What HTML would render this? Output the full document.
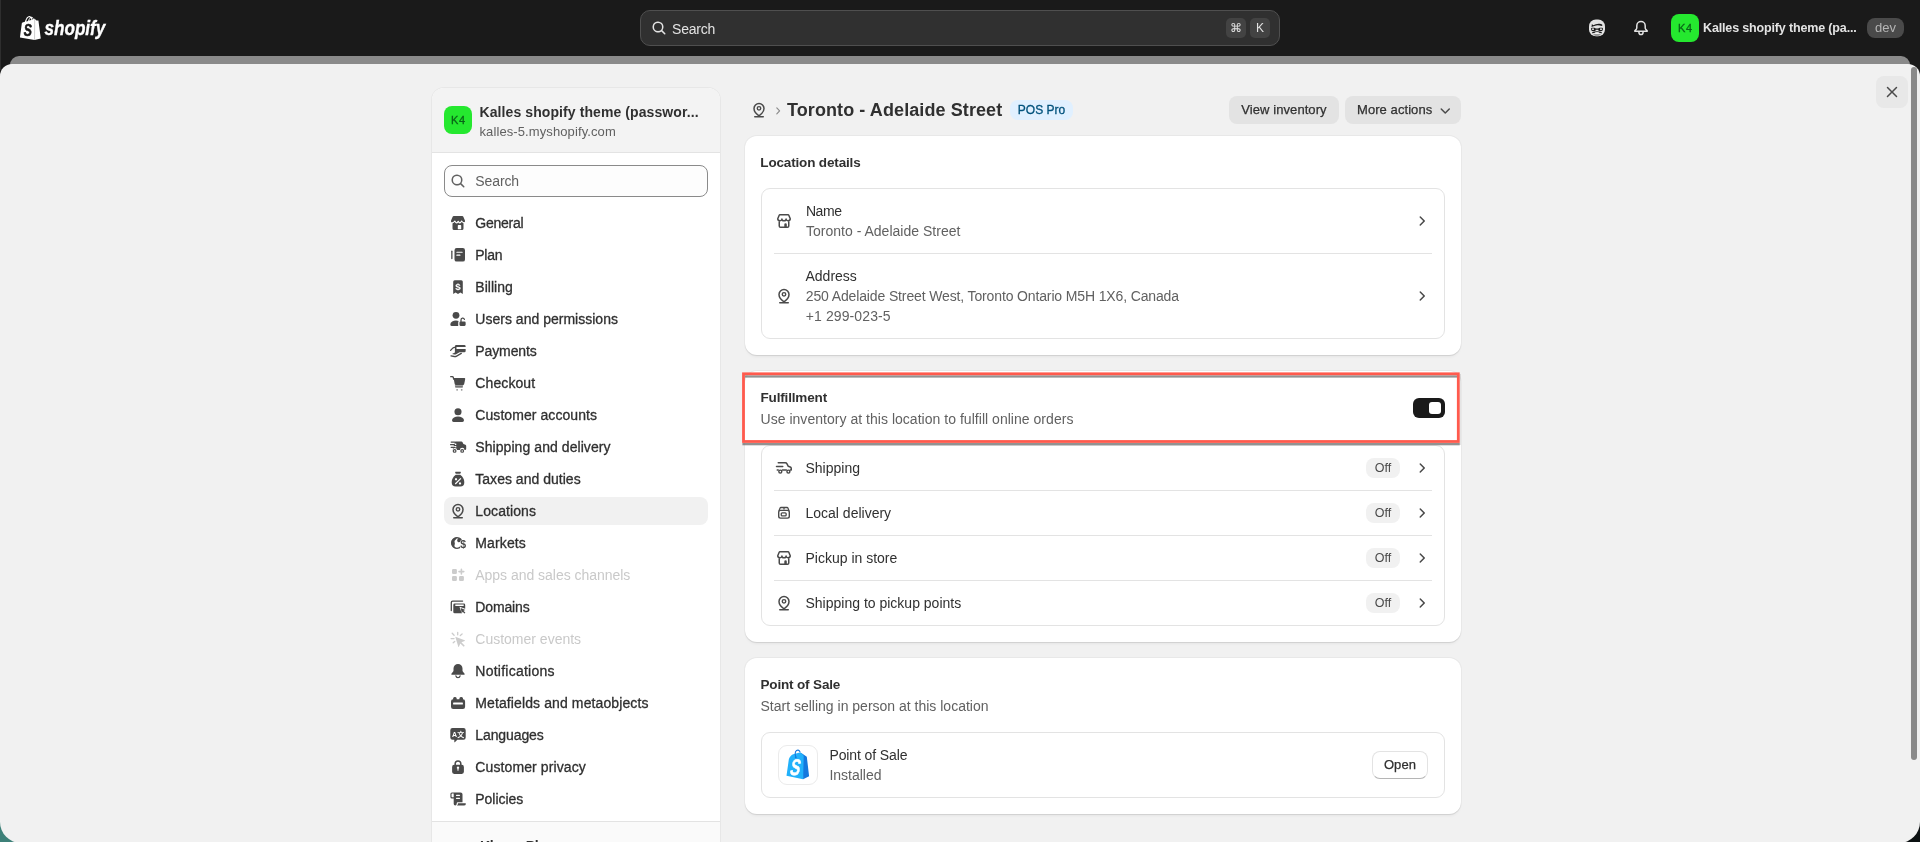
<!DOCTYPE html>
<html lang="en">
<head>
<meta charset="utf-8">
<title>Toronto - Adelaide Street · Locations · Settings</title>
<style>
*{box-sizing:border-box;margin:0;padding:0}
html,body{width:1920px;height:842px;overflow:hidden}
body{position:relative;will-change:transform;background:#1a1a1a;font-family:"Liberation Sans",sans-serif;font-size:14px;color:#303030;-webkit-font-smoothing:antialiased}
.abs{position:absolute}
svg{display:block}
.t{position:absolute;white-space:nowrap;line-height:20px;height:20px}
/* top bar */
#topbar{position:absolute;left:0;top:0;width:1920px;height:56px;background:#1a1a1a}
#gsearch{position:absolute;left:640px;top:10px;width:640px;height:36px;border-radius:10px;background:#303030;border:1px solid #4f4f4f}
#gsearch .ph{position:absolute;left:31px;top:7.500px;font-size:14px;line-height:20px;color:#e3e3e3;letter-spacing:-.2px}
.kbd{position:absolute;top:7px;width:20px;height:20px;border-radius:5px;background:#434343;color:#e3e3e3;font-size:12px;line-height:20px;text-align:center}
#store-av{position:absolute;left:1671px;top:14px;width:28px;height:28px;border-radius:8px;background:#25e82f;color:#0a6418;-webkit-text-stroke:.3px #0a6418;font-size:11px;line-height:28px;text-align:center;letter-spacing:.7px;text-indent:.7px}
#store-name{position:absolute;left:1703px;top:18px;letter-spacing:-.15px;font-size:12.5px;line-height:20px;color:#e3e3e3;font-weight:700}
#dev{position:absolute;left:1867px;top:18px;width:37px;height:20px;border-radius:8px;background:#4a4a4a;color:#b5b5b5;font-size:13px;line-height:19px;text-align:center}
/* sheets */
#backsheet{position:absolute;left:10px;top:56px;width:1900px;height:30px;border-radius:9px 9px 0 0;background:#8a8a8a}
#panel{position:absolute;left:0;top:64px;width:1920px;height:778.500px;border-radius:12px 12px 21px 21px;background:#f1f1f1;overflow:hidden}
#scroll{position:absolute;left:1911px;top:67px;width:6px;height:693px;border-radius:3px;background:#8a8a8a}
#close{position:absolute;left:1876px;top:76px;width:32px;height:32px;border-radius:8px;background:#e8e8e8}
/* sidebar */
#side{position:absolute;left:432px;top:88px;width:288px;height:780px;box-shadow:0 0 0 1px #e7e7e7;border-radius:12px;background:#fff;overflow:hidden}
#side-head{position:absolute;left:0;top:0;width:288px;height:65px;background:#f3f3f3;border-bottom:1px solid #e3e3e3}
#side-foot{position:absolute;left:0;top:733px;width:288px;height:60px;background:#fafafa;border-top:1px solid #e3e3e3}
#sv{position:absolute;left:444px;top:106px;width:28px;height:28px;border-radius:8px;background:#25e82f;color:#0a6418;-webkit-text-stroke:.3px #0a6418;font-size:11px;line-height:28px;text-align:center;letter-spacing:.7px;text-indent:.7px}
#ssearch{position:absolute;left:444px;top:165px;width:264px;height:32px;border:1px solid #8a8a8a;border-radius:8px;background:#fdfdfd}
.nav{position:absolute;left:444px;width:264px;height:28px;border-radius:8px}
.nav.sel{background:#f1f1f1}
.nav span{position:absolute;left:31.300px;top:4px;-webkit-text-stroke:.3px currentColor;line-height:20px;font-size:14px;color:#303030;white-space:nowrap}
.nav.dis span{color:#c9c9c9;-webkit-text-stroke:0}
.nav svg{position:absolute;left:4px;top:4px;width:20px;height:20px;fill:#4a4a4a}
.nav.dis svg{fill:#cccccc}
/* cards */
.card{position:absolute;left:745px;width:716px;background:#fff;border-radius:12px;box-shadow:0 1px 0 0 #d2d2d2,0 0 0 1px #e8e8e8,0 3px 3px -1px rgba(0,0,0,.05)}
.inner{position:absolute;left:761px;width:684px;border:1px solid #e3e3e3;border-radius:9px;background:#fff}
.hr{position:absolute;left:774px;width:658px;height:1px;background:#e3e3e3}
.h{font-weight:700;color:#303030;font-size:13.500px;letter-spacing:-.16px}
.sub{color:#616161}
.ic{position:absolute;width:20px;height:20px}
.off{position:absolute;left:1366px;width:34px;height:20px;border-radius:8px;background:#f1f1f1;color:#4a4a4a;font-size:12.5px;line-height:20px;text-align:center}
.btn{position:absolute;height:28px;border-radius:8px;background:#e3e3e3;color:#303030;font-size:13px;line-height:28px;white-space:nowrap;letter-spacing:.07px;-webkit-text-stroke:.25px #303030}
</style>
</head>
<body>
<!-- TOP BAR -->
<div id="topbar">
  <svg class="abs" style="left:20px;top:16px" width="21" height="24" viewBox="0 0 109 124">
    <path fill="#fff" d="M95.900 23.900c-.1-.6-.6-1-1.100-1-.5 0-9.300-.200-9.300-.200s-7.400-7.200-8.100-7.900c-.7-.7-2.200-.500-2.700-.300l-3.700 1.100c-.4-1.300-1-2.800-1.800-4.400C66.600 6.200 62.700 3.500 58.100 3.500c-.3 0-.6 0-1 .1-.1-.2-.3-.3-.4-.5C54.700.9 52.100-.1 49 0c-6 .2-12 4.500-16.800 12.200-3.400 5.400-6 12.200-6.800 17.500-6.900 2.100-11.700 3.600-11.800 3.700-3.500 1.100-3.600 1.200-4 4.500C9.100 40.300 0 111.200 0 111.200l75.600 13.100 32.800-8.100S96 24.500 95.900 23.900Z"/>
    <path fill="#1a1a1a" d="M48.500 5.500c-7.500 2-13.500 12-16 22.500l9.500-2.900c1.600-8.300 5.500-13.500 9.300-15.600-.8-2.400-1.800-3.700-2.800-4ZM55 11.500c-3 1.700-6 6-7.500 12l11.500-3.500c-.3-3.500-1.800-7-4-8.500ZM60.500 9c1.700 2.300 2.800 5.700 3 9.500l4.500-1.400c-1-4.200-3.700-7.500-7.500-8.100Z"/>
    <path fill="none" stroke="#1a1a1a" stroke-opacity=".45" stroke-width="2.500" d="M76.200 15.500l-.700 108"/>
    <text transform="translate(41 103) scale(.74 1)" font-family="Liberation Sans,sans-serif" font-weight="700" font-style="italic" font-size="86" fill="#1a1a1a" stroke="#1a1a1a" stroke-width="3" text-anchor="middle">S</text>
  </svg>
  <svg class="abs" style="left:42px;top:12px" width="70" height="32" viewBox="0 0 70 32"><text transform="translate(2.600 23) scale(.86 1)" font-family="Liberation Sans,sans-serif" font-weight="700" font-style="italic" font-size="20" fill="#fff" stroke="#fff" stroke-width=".35" letter-spacing="-.1">shopify</text></svg>
  <div id="gsearch">
    <svg class="abs" style="left:8px;top:7px" width="20" height="20" viewBox="0 0 20 20"><path fill="#e3e3e3" fill-rule="evenodd" d="M12.323 13.383a5.500 5.500 0 1 1 1.060-1.060l2.897 2.897a.750.750 0 1 1-1.060 1.060l-2.897-2.897Zm.677-4.383a4 4 0 1 1-8 0 4 4 0 0 1 8 0Z"/></svg>
    <div class="ph">Search</div>
    <div class="kbd" style="left:585px;font-size:12px;line-height:21px">⌘</div>
    <div class="kbd" style="left:609px">K</div>
  </div>
  <svg class="abs" style="left:1587px;top:18px" width="20" height="20" viewBox="0 0 20 20">
    <rect x="2" y="1.600" width="16" height="16.700" rx="6.800" fill="#e3e3e3"/>
    <path fill="#1a1a1a" d="M4.500 8.900l.400-2.900 1.300 1.200q2.700-1.700 6.200-1.500 1.900.1 2.900 1 .5.700-.300 1.100-1 .300-2-.200-2.900-.900-5.700.500Z"/>
    <path fill="#1a1a1a" d="M4.100 10.600q0-.900.900-.900h2.100q1.200 0 1.600.900h2.600q.4-.900 1.600-.900h2.100q.9 0 .9.900v.700q0 1.900-1.900 1.900h-1q-1.700 0-1.800-1.500h-2.400q-.1 1.500-1.800 1.500h-1q-1.900 0-1.900-1.900Z"/>
    <circle cx="6" cy="11.200" r=".85" fill="#fff"/><circle cx="14" cy="11.200" r=".85" fill="#fff"/>
    <path fill="none" stroke="#1a1a1a" stroke-width="1.200" stroke-linecap="round" d="M5.600 14.700q4.400-1.700 8.800 0"/>
    <rect x="8.100" y="14.300" width="3.800" height="1.200" rx=".5" fill="#fff"/>
    <path fill="#9a9a9a" d="M6.400 16.100h7.200q.4 0 .1.400-1.500 1.800-3.700 1.800t-3.700-1.800q-.3-.400.100-.400Z"/>
  </svg>
  <svg class="abs" style="left:1631px;top:18px" width="20" height="20" viewBox="0 0 20 20" fill="none" stroke="#e3e3e3" stroke-width="1.500" stroke-linejoin="round" stroke-linecap="round">
    <path d="M10 3.550a4.200 4.200 0 0 0-4.200 4.200v2.100q0 .600-.350 1.050l-1.550 1.850q-.350.500.250.500h11.700q.600 0 .250-.500l-1.550-1.850q-.350-.450-.350-1.050v-2.100a4.200 4.200 0 0 0-4.200-4.200Z"/>
    <path d="M7.900 13.900a2.100 2.700 0 0 0 4.200 0"/>
  </svg>
  <div id="store-av">K4</div>
  <div id="store-name">Kalles shopify theme (pa...</div>
  <div id="dev">dev</div>
</div>

<!-- SHEETS -->
<div id="backsheet"></div>
<div class="abs" style="left:0;top:0;width:1px;height:70px;background:#2e2e2e"></div>
<div class="abs" style="left:0;top:816px;width:32px;height:26px;background:#3d8078"></div>
<div class="abs" style="left:1890px;top:816px;width:30px;height:26px;background:#0c1112"></div>
<div id="panel"></div>
<div id="scroll"></div>
<div id="close"><svg class="abs" style="left:6px;top:6px" width="20" height="20" viewBox="0 0 20 20"><path fill="#4a4a4a" d="M13.970 15.030a.750.750 0 1 0 1.060-1.060l-3.970-3.970 3.970-3.970a.750.750 0 0 0-1.060-1.060l-3.970 3.970-3.970-3.970a.750.750 0 0 0-1.060 1.060l3.970 3.970-3.970 3.970a.750.750 0 1 0 1.060 1.060l3.970-3.970 3.970 3.970Z"/></svg></div>

<!-- SIDEBAR -->
<div id="side">
  <div id="side-head"></div>
  <div id="side-foot"></div>
</div>
<div id="sv">K4</div>
<div class="t h" style="left:479.500px;top:102px;font-size:14px;letter-spacing:.09px">Kalles shopify theme (passwor...</div>
<div class="t sub" style="left:479.500px;top:122px;font-size:13px;letter-spacing:.1px">kalles-5.myshopify.com</div>
<div id="ssearch">
  <svg class="abs" style="left:3px;top:5px" width="20" height="20" viewBox="0 0 20 20"><path fill="#616161" fill-rule="evenodd" d="M12.323 13.383a5.500 5.500 0 1 1 1.060-1.060l2.897 2.897a.750.750 0 1 1-1.060 1.060l-2.897-2.897Zm.677-4.383a4 4 0 1 1-8 0 4 4 0 0 1 8 0Z"/></svg>
  <div class="t sub" style="left:30.300px;top:5px;letter-spacing:-.1px">Search</div>
</div>
<div class="nav" style="top:209px"><svg viewBox="0 0 20 20"><path d="M5.800 3h8.400q.85 0 1.150.800l1.600 3.750q.35 1.350-.650 2.050-.4.250-.800.350v5.550q0 1.600-1.600 1.600h-7.800q-1.600 0-1.600-1.600v-5.550q-.4-.100-.800-.350-1-.700-.650-2.050l1.600-3.750q.3-.800 1.150-.800Z"/><path fill="none" stroke="#ffffff" stroke-width="1.150" stroke-linejoin="round" d="M3.400 9.800q1.900.5 3.400-1.800 1.100 1.900 1.700 1.900t1.700-1.600q1.100 1.600 1.700 1.600t1.700-1.900q1.500 2.300 3.400 1.800"/><path fill="#ffffff" d="M10.500 12h2q.7 0 .7.700v3.600h-3.400v-3.600q0-.7.700-.7Z"/></svg><span style="letter-spacing:-0.243px">General</span></div>
<div class="nav" style="top:241px"><svg viewBox="0 0 20 20"><rect x="3.200" y="5.500" width="1.300" height="8.700" rx=".65"/><path fill-rule="evenodd" d="M8.700 3h6.100q2.200 0 2.200 2.200v9.200q0 2.200-2.200 2.200h-6.100q-2.200 0-2.200-2.200v-9.200q0-2.200 2.200-2.200ZM8.900 6.650a.6.6 0 0 0 0 1.200h5.200a.6.6 0 0 0 0-1.200ZM8.900 9.550a.6.6 0 0 0 0 1.200h3a.6.6 0 0 0 0-1.200Z"/></svg><span style="letter-spacing:-0.300px">Plan</span></div>
<div class="nav" style="top:273px"><svg viewBox="0 0 20 20"><path d="M6.700 3.200h6.600q1.500 0 1.500 1.500v12.250l-2.400-1.550-2.400 1.550-2.400-1.550-2.400 1.550v-12.250q0-1.500 1.500-1.500Z"/><text x="10" y="13.200" text-anchor="middle" font-family="Liberation Sans,sans-serif" font-weight="700" font-size="9.800" fill="#ffffff">$</text></svg><span style="letter-spacing:0.014px">Billing</span></div>
<div class="nav" style="top:305px"><svg viewBox="0 0 20 20"><circle cx="8" cy="6.300" r="3.400"/><path d="M2.300 15.400q0-1.700 1.900-2.900 1.700-1.100 3.800-1.100 1.500 0 2.700.5-.5.600-.5 1.500v3.700h-6.400q-1.500 0-1.500-1.700Z"/><path d="M12.600 12.500h3.900q1.150 0 1.150 1.150v2.200q0 1.150-1.150 1.150h-3.900q-1.150 0-1.150-1.150v-2.200q0-1.150 1.150-1.150Z"/><path fill="none" stroke="#4a4a4a" stroke-width="1.300" stroke-linecap="round" d="M13 12.600v-1.700a1.750 1.750 0 0 1 3.400-.55"/></svg><span style="letter-spacing:0.014px">Users and permissions</span></div>
<div class="nav" style="top:337px"><svg viewBox="0 0 20 20"><path fill-rule="evenodd" d="M8.300 4.100h8q1.350 0 1.350 1.350v4.500q0 1.350-1.350 1.350h-4.800l-3.400 1.900q-.9.400-1.800.200l-2.300-.5 2.900-1.300v-6.150q0-1.350 1.400-1.350ZM8.500 6v1.900h9.150v-1.900Z"/><path fill="none" stroke="#4a4a4a" stroke-width="1.300" stroke-linecap="round" stroke-linejoin="round" d="M2.600 9.400 5 6.900q.6-.55 1.500-.55h.9M3 14.900l3.300.6q1.200.2 2.300-.400l4.700-2.700"/></svg><span style="letter-spacing:-0.112px">Payments</span></div>
<div class="nav" style="top:369px"><svg viewBox="0 0 20 20"><path fill="none" stroke="#4a4a4a" stroke-width="1.300" stroke-linecap="round" stroke-linejoin="round" d="M2.700 3.700h1.600q.8 0 1 .800l.4 1.600"/><path d="M5.600 5h10.700q1.100 0 .9 1.100l-1 5q-.2.900-1.100.900h-7.300q-.9 0-1.100-.900Z"/><path opacity=".55" d="M6.900 12h8.300l-.3 1.400q-.15.650-.8.650h-6.500q-.6 0-.600-.600Z"/><path d="M7.300 13.500h7.400v1.100h-7.400Z" opacity=".9"/><circle cx="9.100" cy="16.800" r=".9" opacity=".6"/><circle cx="13.700" cy="16.800" r=".9" opacity=".6"/></svg><span style="letter-spacing:0.100px">Checkout</span></div>
<div class="nav" style="top:401px"><svg viewBox="0 0 20 20"><circle cx="10" cy="6.800" r="3.550"/><path d="M4 15.300q0-1.700 2-2.850 1.800-1.050 4-1.050t4 1.050q2 1.150 2 2.850 0 1.800-1.600 1.800h-8.800q-1.600 0-1.600-1.800Z"/></svg><span style="letter-spacing:0.071px">Customer accounts</span></div>
<div class="nav" style="top:433px"><svg viewBox="0 0 20 20"><path d="M8.200 4.500h5.300q.6 0 .9.500l1 1.900 2 .9q.8.400.8 1.300v2.700q0 1.200-1.200 1.200h-.5a2.300 2.300 0 0 0-4.600 0h-2.800a2.300 2.300 0 0 0-4.500-.3l.600-2.300h2.600a.65.65 0 0 0 0-1.300h-2.200l.3-1.200h1.900a.65.65 0 0 0 0-1.300h-1.500l.3-1.200q.2-.900 1.100-.900Z"/><path fill="none" stroke="#4a4a4a" stroke-width="1.300" stroke-linecap="round" d="M3.200 5.100h3.400M2.600 7.700h3.800M3.200 10.300h3.700"/><circle cx="6.600" cy="13.900" r="1.350" fill="none" stroke="#4a4a4a" stroke-width="1.200"/><circle cx="14.200" cy="13.900" r="1.350" fill="none" stroke="#4a4a4a" stroke-width="1.200"/></svg><span style="letter-spacing:0.067px">Shipping and delivery</span></div>
<div class="nav" style="top:465px"><svg viewBox="0 0 20 20"><path fill-rule="evenodd" d="M7.600 2.700h4.800q.7 0 .5.650l-.6 1.450h-4.600l-.6-1.450q-.2-.650.500-.650ZM7.800 5.700h4.400q4.100 3 4.100 7.500 0 4.300-4 4.300h-4.600q-4 0-4-4.300 0-4.500 4.100-7.500ZM8 9.100a1.150 1.150 0 1 0 .01 0ZM12 13.200a1.150 1.150 0 1 0 .01 0ZM12.400 8.900l-5.600 5.700.9.900 5.600-5.700Z"/></svg><span style="letter-spacing:0.019px">Taxes and duties</span></div>
<div class="nav sel" style="top:497px"><svg viewBox="0 0 20 20"><path fill="none" stroke="#4a4a4a" stroke-width="1.500" stroke-linejoin="round" d="M10 15.800c-3-2.050-5-4.600-5-7.300a5 5 0 0 1 10 0c0 2.700-2 5.250-5 7.300Z"/><circle cx="10" cy="8.350" r="1.750" fill="none" stroke="#4a4a4a" stroke-width="1.400"/><path fill="none" stroke="#4a4a4a" stroke-width="1.500" stroke-linecap="round" d="M5.750 16.750h8.500"/></svg><span style="letter-spacing:0.089px">Locations</span></div>
<div class="nav" style="top:529px"><svg viewBox="0 0 20 20"><circle cx="9" cy="10" r="5.350" fill="none" stroke="#4a4a4a" stroke-width="1.300"/><path d="M9 4.200a5.800 5.800 0 0 0 0 11.600q-3.400-1.500-2.300-4.300.4-1.200-.1-2.200-.6-1.600 1-2.600 1.300-.8 1.400-2.500Z"/><path d="M9.800 5l2.700.6.900 1.800-1.300 1.700-1.900.2-1.100-1.300Z"/><rect x="12.200" y="6.600" width="6.300" height="11" rx="2.500" fill="#ffffff"/><text x="15.200" y="15.300" text-anchor="middle" font-family="Liberation Sans,sans-serif" font-weight="700" font-size="10.500">$</text></svg><span style="letter-spacing:0.129px">Markets</span></div>
<div class="nav dis" style="top:561px"><svg viewBox="0 0 20 20"><rect x="4" y="4" width="4.900" height="4.900" rx="1.200"/><rect x="4" y="11" width="4.900" height="4.900" rx="1.200"/><rect x="11" y="11" width="4.900" height="4.900" rx="1.200"/><path fill="none" stroke="#cccccc" stroke-width="1.600" stroke-linecap="round" d="M13.400 4.200v4.800M11 6.600h4.800"/></svg><span style="letter-spacing:-0.030px">Apps and sales channels</span></div>
<div class="nav" style="top:593px"><svg viewBox="0 0 20 20"><path fill="none" stroke="#4a4a4a" stroke-width="1.300" stroke-linecap="round" stroke-linejoin="round" d="M3.300 13.500v-8q0-1.400 1.400-1.400h9.900"/><path fill-rule="evenodd" d="M6.700 6.500h9.100q1.400 0 1.400 1.400v3.900l-4.900-1.900q-.9-.3-.6.600l2.100 5.800h-7.100q-1.400 0-1.400-1.400v-7q0-1.400 1.400-1.400ZM7.300 7.600v1.300h8.400v-1.300Z"/><path d="M12.700 11.100l4.700 1.800-1.900.9 1.900 1.900-.9.900-1.900-1.900-.8 1.900Z"/></svg><span style="letter-spacing:-0.143px">Domains</span></div>
<div class="nav dis" style="top:625px"><svg viewBox="0 0 20 20"><path d="M7.300 7.800l9.400 3.500q.6.300 0 .6l-3.300 1.400 3.400 3.400-1.100 1.100-3.400-3.400-1.400 3.300q-.3.600-.6 0Z"/><path fill="none" stroke="#cccccc" stroke-width="1.300" stroke-linecap="round" d="M9.700 3.300v2.500M3.100 9.600h2.900M4.200 4.300l1.900 1.900M12.300 6.500l1.800-1.500M5.200 13.800l1.500-1.300"/></svg><span style="letter-spacing:0.000px">Customer events</span></div>
<div class="nav" style="top:657px"><svg viewBox="0 0 20 20"><path d="M10 2.900a4.500 4.500 0 0 1 4.500 4.500v2.100q0 .6.300 1.100l1.800 2.200q.6 1-.6 1h-12q-1.200 0-.600-1l1.800-2.200q.3-.5.300-1.100v-2.100a4.500 4.500 0 0 1 4.500-4.500Z"/><path fill="none" stroke="#4a4a4a" stroke-width="1.300" stroke-linecap="round" d="M7.900 14.900a2.150 2.150 0 0 0 4.200 0"/></svg><span style="letter-spacing:0.246px">Notifications</span></div>
<div class="nav" style="top:689px"><svg viewBox="0 0 20 20"><path fill-rule="evenodd" d="M5.100 6.300v-.8q0-1.500 1.500-1.500h.6q1.500 0 1.500 1.500v.8h2.700v-.8q0-1.500 1.500-1.500h.6q1.500 0 1.500 1.500v.8q2.100.1 2.100 2.200v5.200q0 2.200-2.200 2.200h-9.700q-2.200 0-2.200-2.200v-5.200q0-2.100 2.100-2.200ZM5.600 9.400a.5.500 0 0 0-.5.500v1a.5.500 0 0 0 .5.500h8.800a.5.500 0 0 0 .5-.5v-1a.5.500 0 0 0-.5-.5Z"/></svg><span style="letter-spacing:0.108px">Metafields and metaobjects</span></div>
<div class="nav" style="top:721px"><svg viewBox="0 0 20 20"><path d="M4.500 3h11q2.200 0 2.200 2.200v7.300q0 2.200-2.200 2.200h-6.200l-2.200 2.400q-.8.700-.8-.400v-2h-1.800q-2.200 0-2.200-2.200v-7.300q0-2.200 2.200-2.200Z"/><text x="4.100" y="12" font-family="Liberation Sans,sans-serif" font-weight="700" font-size="7" fill="#ffffff">A</text><text x="9.300" y="12.300" font-family="Noto Sans CJK SC,sans-serif" font-weight="700" font-size="7" fill="#ffffff">文</text></svg><span style="letter-spacing:-0.100px">Languages</span></div>
<div class="nav" style="top:753px"><svg viewBox="0 0 20 20"><path fill="none" stroke="#4a4a4a" stroke-width="1.500" d="M7.200 8.300v-1.600a2.800 2.800 0 0 1 5.600 0v1.600"/><path fill-rule="evenodd" d="M6.200 7.800h7.600q2.100 0 2.100 2.100v4.900q0 2.100-2.100 2.100h-7.600q-2.100 0-2.100-2.100v-4.900q0-2.100 2.100-2.100ZM10 9.600a1.200 1.200 0 0 0-.55 2.270v1.430a.55.55 0 0 0 1.100 0v-1.430a1.200 1.200 0 0 0-.55-2.270Z"/></svg><span style="letter-spacing:0.106px">Customer privacy</span></div>
<div class="nav" style="top:785px"><svg viewBox="0 0 20 20"><path fill-rule="evenodd" d="M3.900 3.400h8.700q1.900 0 1.900 1.900v8h-4.600q-1.200 0-1.200 1.200v.3q0 1.600-1.500 1.600t-1.500-1.600v-5.400h-1.800q-1.500 0-1.500-1.500v-3q0-1.500 1.500-1.500ZM4 4.600q-.45 0-.45.450v2.700q0 .450.450.450h1.700v-3.600ZM8.500 5.700a.6.600 0 0 0 0 1.200h3a.6.600 0 0 0 0-1.200ZM8.500 8.700a.6.600 0 0 0 0 1.200h3a.6.600 0 0 0 0-1.200Z"/><path d="M10 14.200h7.300q.7 0 .6.700-.3 1.700-2 1.700h-7.100q1.200-.5 1.200-2.400Z"/></svg><span style="letter-spacing:-0.037px">Policies</span></div>
<div class="t h" style="left:480px;top:835.500px;font-size:14px;letter-spacing:-.3px">Khang Pham</div>

<!-- MAIN -->
<!-- page header -->
<svg class="ic" style="left:749px;top:100px;color:#4a4a4a" viewBox="0 0 20 20"><path fill="none" stroke="currentColor" stroke-width="1.500" stroke-linejoin="round" d="M10 15.800c-3-2.050-5-4.600-5-7.300a5 5 0 0 1 10 0c0 2.700-2 5.250-5 7.300Z"/><circle cx="10" cy="8.350" r="1.750" fill="none" stroke="currentColor" stroke-width="1.400"/><path fill="none" stroke="currentColor" stroke-width="1.500" stroke-linecap="round" d="M5.750 16.750h8.500"/></svg>
<svg class="ic" style="left:768px;top:101px;color:#8a8a8a" viewBox="0 0 20 20"><path fill="none" stroke="currentColor" stroke-width="1.150" stroke-linecap="round" stroke-linejoin="round" d="M8.800 6.900l2.800 3-2.800 3"/></svg>
<div class="t h" id="title" style="left:787px;top:98px;font-size:18px;letter-spacing:.09px;line-height:24px;height:24px">Toronto - Adelaide Street</div>
<div class="abs" id="pospro" style="left:1010px;top:100px;width:63px;height:20px;border-radius:8px;background:#e0f0ff;color:#00527c;font-size:12px;-webkit-text-stroke:.3px #00527c;line-height:20px;text-align:center;white-space:nowrap">POS Pro</div>
<div class="btn" style="left:1229px;top:96px;width:110px;text-align:center">View inventory</div>
<div class="btn" style="left:1345px;top:96px;width:116px;padding-left:12px">More actions<svg class="ic" style="left:90px;top:4px;color:#4a4a4a" viewBox="0 0 20 20"><path fill="currentColor" fill-rule="evenodd" d="M5.720 8.470a.75.75 0 0 1 1.060 0l3.470 3.470 3.470-3.470a.75.75 0 1 1 1.060 1.060l-4 4a.75.75 0 0 1-1.060 0l-4-4a.75.75 0 0 1 0-1.060Z"/></svg></div>

<!-- Location details -->
<div class="card" style="top:136px;height:219px"></div>
<div class="t h" style="left:760.300px;top:152.900px">Location details</div>
<div class="inner" style="top:188px;height:151px"></div>
<svg class="ic" style="left:774px;top:211px;color:#4a4a4a" viewBox="0 0 20 20"><path fill="none" stroke="currentColor" stroke-width="1.500" stroke-linejoin="round" stroke-linecap="round" d="M5.900 3.750H14.100Q14.600 3.750 14.800 4.200L16.250 7.800C16.250 10.300 12.100 10.300 12.100 7.900C12.100 10.300 7.900 10.300 7.900 7.900C7.900 10.300 3.750 10.300 3.750 7.800L5.200 4.200Q5.400 3.750 5.900 3.750Z"/><path fill="none" stroke="currentColor" stroke-width="1.500" stroke-linejoin="round" stroke-linecap="round" d="M5.250 10.800V15Q5.250 16.250 6.500 16.250H13.500Q14.750 16.250 14.750 15V10.800"/><path fill="currentColor" d="M10.300 16.250v-2.700a1.250 1.250 0 0 1 2.500 0v2.700Z"/></svg>
<div class="t" style="left:805.900px;top:201px;letter-spacing:-.4px">Name</div>
<div class="t sub" style="left:805.900px;top:221px;letter-spacing:.02px">Toronto - Adelaide Street</div>
<svg class="ic" style="left:1412px;top:211px;color:#4a4a4a" viewBox="0 0 20 20"><path fill="currentColor" fill-rule="evenodd" d="M7.720 14.530a.75.75 0 0 1 0-1.060l3.470-3.470-3.470-3.470a.75.75 0 0 1 1.060-1.060l4 4a.75.75 0 0 1 0 1.060l-4 4a.75.75 0 0 1-1.060 0Z"/></svg>
<div class="hr" style="top:253px"></div>
<svg class="ic" style="left:774px;top:286px;color:#4a4a4a" viewBox="0 0 20 20"><path fill="none" stroke="currentColor" stroke-width="1.500" stroke-linejoin="round" d="M10 15.800c-3-2.050-5-4.600-5-7.300a5 5 0 0 1 10 0c0 2.700-2 5.250-5 7.300Z"/><circle cx="10" cy="8.350" r="1.750" fill="none" stroke="currentColor" stroke-width="1.400"/><path fill="none" stroke="currentColor" stroke-width="1.500" stroke-linecap="round" d="M5.750 16.750h8.500"/></svg>
<div class="t" style="left:805.500px;top:266px">Address</div>
<div class="t sub" style="left:805.800px;top:286px;letter-spacing:-.135px">250 Adelaide Street West, Toronto Ontario M5H 1X6, Canada</div>
<div class="t sub" style="left:805.800px;top:306px;letter-spacing:.1px">+1 299-023-5</div>
<svg class="ic" style="left:1412px;top:286px;color:#4a4a4a" viewBox="0 0 20 20"><path fill="currentColor" fill-rule="evenodd" d="M7.720 14.530a.75.75 0 0 1 0-1.060l3.470-3.470-3.470-3.470a.75.75 0 0 1 1.060-1.060l4 4a.75.75 0 0 1 0 1.060l-4 4a.75.75 0 0 1-1.060 0Z"/></svg>

<!-- Fulfillment -->
<div class="card" style="top:371px;height:271px"></div>
<div class="t h" style="left:760.500px;top:387.900px">Fulfillment</div>
<div class="t sub" style="left:760.500px;top:409px;letter-spacing:.03px">Use inventory at this location to fulfill online orders</div>
<div class="abs" id="toggle" style="left:1413px;top:398px;width:32px;height:20px;border-radius:6px;background:#1a1a1a"><div class="abs" style="left:16px;top:4px;width:12px;height:12px;border-radius:3px;background:#fff"></div></div>
<div class="inner" style="top:445px;height:181px"></div>
<svg id="hl" class="abs" style="left:736px;top:366px" width="732" height="88" viewBox="736 366 732 88">
<defs><filter id="sb" x="-5%" y="-200%" width="110%" height="500%"><feGaussianBlur stdDeviation=".45"/></filter></defs>
<rect x="744.700" y="375.300" width="712.400" height="2.300" fill="#6e6e6e" opacity=".75" filter="url(#sb)"/>
<rect x="742.400" y="443" width="717.300" height="2.300" fill="#6e6e6e" opacity=".75" filter="url(#sb)"/>
<rect x="1459.600" y="374" width="1" height="71" fill="#6e6e6e" opacity=".3" filter="url(#sb)"/>
<rect x="743.500" y="373.800" width="714.800" height="67.700" fill="none" stroke="#ff5a4d" stroke-width="2.800"/>
</svg>

<svg class="ic" style="left:774px;top:458px;color:#4a4a4a" viewBox="0 0 20 20"><path fill="none" stroke="currentColor" stroke-width="1.500" stroke-linecap="round" stroke-linejoin="round" d="M4.250 4.750h7q1.200 0 1.750 1.050l1.300 2.500 1.950.750q1 .400 1 1.450v1.500h-.900M12.300 12h-3.900M4.200 12h-.950M2.500 8.400h6.250"/><circle cx="6.300" cy="13.600" r="1.500" fill="none" stroke="currentColor" stroke-width="1.400"/><circle cx="14.400" cy="13.600" r="1.500" fill="none" stroke="currentColor" stroke-width="1.400"/></svg>
<div class="t" style="left:805.500px;top:458px">Shipping</div>
<div class="off" style="top:458px">Off</div>
<svg class="ic" style="left:1412px;top:458px;color:#4a4a4a" viewBox="0 0 20 20"><path fill="currentColor" fill-rule="evenodd" d="M7.720 14.530a.75.75 0 0 1 0-1.060l3.470-3.470-3.470-3.470a.75.75 0 0 1 1.060-1.060l4 4a.75.75 0 0 1 0 1.060l-4 4a.75.75 0 0 1-1.060 0Z"/></svg>
<div class="hr" style="top:490px"></div>

<svg class="ic" style="left:774px;top:503px;color:#4a4a4a" viewBox="0 0 20 20"><path fill="none" stroke="currentColor" stroke-width="1.400" stroke-linejoin="round" d="M6.500 7.350h7q1.800 0 1.800 1.800v4.200q0 1.800-1.800 1.800h-7q-1.800 0-1.800-1.800v-4.200q0-1.800 1.800-1.800Z"/><path fill="none" stroke="currentColor" stroke-width="1.300" stroke-linecap="round" stroke-linejoin="round" d="M5.100 7.600l1-2.500q.250-.600.900-.600h6q.650 0 .900.600l1 2.500M10 4.600v1.500"/><rect x="7.250" y="9.800" width="4.900" height="3.100" rx="1" fill="none" stroke="currentColor" stroke-width="1.300"/></svg>
<div class="t" style="left:805.500px;top:503px">Local delivery</div>
<div class="off" style="top:503px">Off</div>
<svg class="ic" style="left:1412px;top:503px;color:#4a4a4a" viewBox="0 0 20 20"><path fill="currentColor" fill-rule="evenodd" d="M7.720 14.530a.75.75 0 0 1 0-1.060l3.470-3.470-3.470-3.470a.75.75 0 0 1 1.060-1.060l4 4a.75.75 0 0 1 0 1.060l-4 4a.75.75 0 0 1-1.060 0Z"/></svg>
<div class="hr" style="top:535px"></div>

<svg class="ic" style="left:774px;top:548px;color:#4a4a4a" viewBox="0 0 20 20"><path fill="none" stroke="currentColor" stroke-width="1.500" stroke-linejoin="round" stroke-linecap="round" d="M5.900 3.750H14.100Q14.600 3.750 14.800 4.200L16.250 7.800C16.250 10.300 12.100 10.300 12.100 7.900C12.100 10.300 7.900 10.300 7.900 7.900C7.900 10.300 3.750 10.300 3.750 7.800L5.200 4.200Q5.400 3.750 5.900 3.750Z"/><path fill="none" stroke="currentColor" stroke-width="1.500" stroke-linejoin="round" stroke-linecap="round" d="M5.250 10.800V15Q5.250 16.250 6.500 16.250H13.500Q14.750 16.250 14.750 15V10.800"/><path fill="currentColor" d="M10.300 16.250v-2.700a1.250 1.250 0 0 1 2.500 0v2.700Z"/></svg>
<div class="t" style="left:805.500px;top:548px">Pickup in store</div>
<div class="off" style="top:548px">Off</div>
<svg class="ic" style="left:1412px;top:548px;color:#4a4a4a" viewBox="0 0 20 20"><path fill="currentColor" fill-rule="evenodd" d="M7.720 14.530a.75.75 0 0 1 0-1.060l3.470-3.470-3.470-3.470a.75.75 0 0 1 1.060-1.060l4 4a.75.75 0 0 1 0 1.060l-4 4a.75.75 0 0 1-1.060 0Z"/></svg>
<div class="hr" style="top:580px"></div>

<svg class="ic" style="left:774px;top:593px;color:#4a4a4a" viewBox="0 0 20 20"><path fill="none" stroke="currentColor" stroke-width="1.500" stroke-linejoin="round" d="M10 15.800c-3-2.050-5-4.600-5-7.300a5 5 0 0 1 10 0c0 2.700-2 5.250-5 7.300Z"/><circle cx="10" cy="8.350" r="1.750" fill="none" stroke="currentColor" stroke-width="1.400"/><path fill="none" stroke="currentColor" stroke-width="1.500" stroke-linecap="round" d="M5.750 16.750h8.500"/></svg>
<div class="t" style="left:805.500px;top:593px">Shipping to pickup points</div>
<div class="off" style="top:593px">Off</div>
<svg class="ic" style="left:1412px;top:593px;color:#4a4a4a" viewBox="0 0 20 20"><path fill="currentColor" fill-rule="evenodd" d="M7.720 14.530a.75.75 0 0 1 0-1.060l3.470-3.470-3.470-3.470a.75.75 0 0 1 1.060-1.060l4 4a.75.75 0 0 1 0 1.060l-4 4a.75.75 0 0 1-1.060 0Z"/></svg>

<!-- Point of Sale -->
<div class="card" style="top:658px;height:156px"></div>
<div class="t h" style="left:760.500px;top:674.900px">Point of Sale</div>
<div class="t sub" style="left:760.500px;top:696px">Start selling in person at this location</div>
<div class="inner" style="top:732px;height:66px"></div>
<div class="abs" id="posicon" style="left:778px;top:745px;width:40px;height:40px;border-radius:9px;border:1px solid #ebebeb;background:#fff"></div>
<svg class="abs" style="left:774px;top:741px" width="48" height="48" viewBox="0 0 48 48">
<path fill="#1478de" d="M26.600 11.600l6.200 4.100 2.300 19.600-6 2.900-.400-22.700Z"/>
<path fill="#21b1fb" d="M12.500 34.800l2.300-16.200q.3-1.500 1.100-2.500l1.300-1.600q.8-.9 2-1.200l6.600-1.700q.8-.2 1.400.4l2 2.100q.5.600.5 1.400l-.600 22.700Z"/>
<path fill="none" stroke="#1478de" stroke-width="1.100" stroke-linecap="round" d="M21.800 16.200q-1.100-3.600-.300-5.400.9-1.800 2.600-1.700 1.400.2 1.900 1.800"/>
<circle cx="21.800" cy="16.300" r=".9" fill="#1478de"/>
<text transform="translate(20.800 34.300) skewX(-6) scale(.72 1.080)" text-anchor="middle" font-family="Liberation Sans,sans-serif" font-weight="700" font-style="italic" font-size="21" fill="#fff" stroke="#fff" stroke-width=".5">S</text>
</svg>
<div class="t" style="left:829.400px;top:745px;letter-spacing:-.1px">Point of Sale</div>
<div class="t sub" style="left:829.400px;top:765px">Installed</div>
<div class="abs" id="open" style="left:1372px;top:751px;width:56px;height:28px;border-radius:8px;background:#fff;border:1px solid #e3e3e3;border-bottom-color:#b5b5b5;color:#303030;font-size:13px;line-height:26px;text-align:center;-webkit-text-stroke:.25px #303030;letter-spacing:.1px">Open</div>

</body>
</html>
